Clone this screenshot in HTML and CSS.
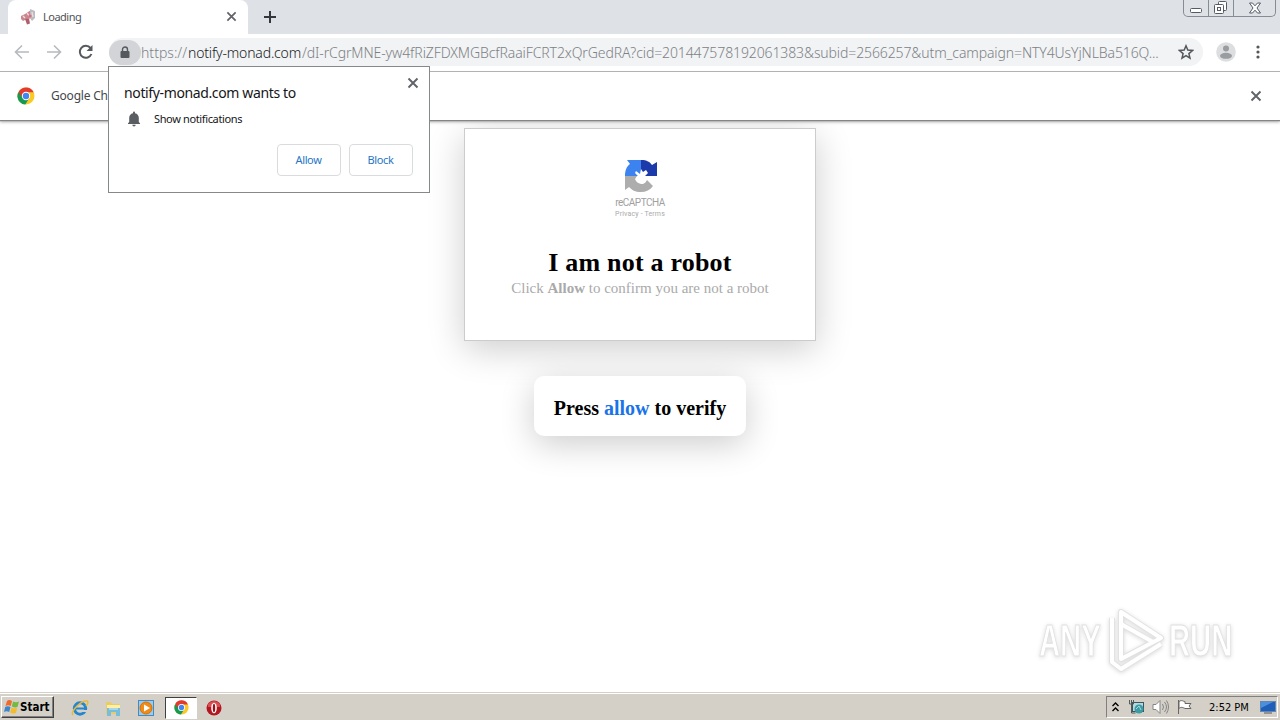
FILE: index.html
```html
<!DOCTYPE html>
<html lang="en">
  <head>
    <meta charset="utf-8">
    <title>Loading</title>
    <link rel="stylesheet" href="styles.css">
  </head>

  <body>
    <svg class="defs" width="0" height="0">
      <symbol id="chrome" viewBox="0 0 18 18">
        <circle cx="9" cy="9" r="8.5" fill="#fbc926"/>
        <path d="M9 9L1.3 5.2A8.5 8.5 0 0 0 8.3 17.5L12.4 11Z" fill="#159a50"/>
        <path d="M1.5 4.9A8.5 8.5 0 0 1 16.7 5.3H9L5.6 11Z" fill="#e23a2e"/>
        <circle cx="9" cy="9" r="4.2" fill="#fff"/>
        <circle cx="9" cy="9" r="3.2" fill="#4285f4"/>
      </symbol>
      <symbol id="close" viewBox="0 0 12 12">
        <path d="M1.5 1.5l9 9M10.5 1.5l-9 9" fill="none" stroke="#606367" stroke-width="1.9"/>
      </symbol>
    </svg>

    <div class="tabstrip">
      <div class="tab">
        <svg class="favicon" width="16" height="16" viewBox="0 0 16 16">
          <path d="M1 7l4-2 6-4 2 8-6 1-4 2-2-2z" fill="#c98890"/>
          <path d="M5 10l4-.5 1 5-3 1z" fill="#b0606c"/>
          <path d="M10 0l5 2v7l-3 3-2-3z" fill="#b9bcc1"/>
          <path d="M3 7l2 2M7 4l3 4M12 3l1 5" stroke="#f2dadd" stroke-width="1.3"/>
          <circle cx="10" cy="7" r="1.6" fill="#dd6b7c"/>
        </svg>
        <span class="tab-title">Loading</span>
        <svg width="11" height="11"><use href="#close"/></svg>
      </div>
      <svg class="new-tab" width="12" height="12" viewBox="0 0 12 12"><path d="M6 0v12M0 6h12" stroke="#34373c" stroke-width="2"/></svg>
      <div class="window-buttons">
        <span><svg width="12" height="6" viewBox="0 0 12 6"><rect x=".5" y="1.5" width="11" height="4" rx="1" fill="#fff" stroke="#555b66"/></svg></span>
        <span><svg width="14" height="14" viewBox="0 0 14 14" fill="#fff" stroke="#555b66"><rect x="4.5" y=".5" width="8" height="9" rx="1"/><rect x=".5" y="3.5" width="9" height="9" rx="1"/><rect x="3.5" y="6.5" width="3" height="3"/></svg></span>
        <span class="wide"><svg width="12" height="12" viewBox="0 0 12 12"><path d="M.5 1h3L6 3.8 8.500 1h3L8 6l3.500 5h-3L6 8.200 3.500 11h-3L4 6z" fill="#fff" stroke="#555b66"/></svg></span>
      </div>
    </div>

    <div class="toolbar">
      <svg class="back" width="16" height="16" viewBox="0 0 16 16" fill="none" stroke="#b7babe" stroke-width="1.6"><path d="M15 8H2M8 1.500L1.500 8 8 14.500"/></svg>
      <svg class="forward" width="16" height="16" viewBox="0 0 16 16" fill="none" stroke="#b7babe" stroke-width="1.6"><path d="M1 8h13M8 1.500L14.500 8 8 14.500"/></svg>
      <svg class="reload" width="16" height="16" viewBox="0 0 16 16"><path d="M13.400 10A6 6 0 1 1 12.500 4" fill="none" stroke="#56595e" stroke-width="2"/><path d="M14.500 1v6h-6z" fill="#56595e"/></svg>
      <div class="omnibox">
        <span class="lock"><svg width="10" height="13" viewBox="0 0 10 13"><path d="M2.500 6V3.500a2.500 2.500 0 0 1 5 0V6" fill="none" stroke="#55585d" stroke-width="1.4"/><rect x=".5" y="5" width="9" height="7" rx="1" fill="#55585d"/></svg></span>
        <span class="scheme">https://</span><span class="host">notify-monad.com</span><span class="path">/dI-rCgrMNE-yw4fRiZFDXMGBcfRaaiFCRT2xQrGedRA?cid=201447578192061383&amp;subid=2566257&amp;utm_campaign=NTY4UsYjNLBa516Q...</span>
        <svg class="star" width="16" height="16" viewBox="0 0 16 16"><path d="M8 1.800l1.800 4.300 4.700.4-3.600 3.100 1.100 4.600L8 11.700l-4 2.500 1.100-4.600L1.500 6.500l4.700-.4z" fill="none" stroke="#54575c" stroke-width="1.5"/></svg>
      </div>
      <svg class="avatar" width="20" height="20" viewBox="0 0 20 20"><circle cx="10" cy="10" r="9.8" fill="#dddedf"/><circle cx="10" cy="6.5" r="3" fill="#999ca0"/><ellipse cx="10" cy="13.8" rx="6" ry="3" fill="#999ca0"/></svg>
      <svg class="menu" width="4" height="14" viewBox="0 0 4 14" fill="#54575c"><circle cx="2" cy="2" r="1.6"/><circle cx="2" cy="7" r="1.6"/><circle cx="2" cy="12" r="1.6"/></svg>
    </div>

    <div class="infobar">
      <svg width="18" height="18"><use href="#chrome"/></svg>
      <span class="infobar-text">Google Ch</span>
      <svg width="12" height="12"><use href="#close"/></svg>
    </div>

    <div class="page">
      <div class="card">
        <svg class="captcha" width="34" height="34" viewBox="0 0 34 34">
          <path d="M17 1v9l-1 5-4-3-1 2 3 3H1C1 11 3 7 6 5L3 1z" fill="#3d83f0"/>
          <path d="M17 1c6 0 9 2 11 5l5-3v14H21l3-3-2-3-3 2-2-3z" fill="#1c3aa9"/>
          <path d="M1 17h12l-2 3c1 3 4 5 8 5 2-1 3-2 4-4l6 6c-3 4-7 6-12 6-6 0-9-2-12-5l-4 3z" fill="#adadad"/>
        </svg>
        <div class="captcha-name">reCAPTCHA</div>
        <div class="captcha-links">Privacy - Terms</div>
        <h1>I am not a robot</h1>
        <p>Click <b>Allow</b> to confirm you are not a robot</p>
      </div>
      <div class="press">Press <span>allow</span> to verify</div>
    </div>

    <div class="prompt">
      <svg class="prompt-close" width="12" height="12"><use href="#close"/></svg>
      <div class="prompt-title">notify-monad.com wants to</div>
      <div class="permission">
        <svg width="14" height="16" viewBox="0 0 14 16" fill="#5a5d62"><path d="M6 1.500a1 1 0 0 1 2 0v.8c2.500.5 3.800 2.300 3.800 4.700v4L13 12.300v.7H1v-.7L2.200 11V7c0-2.400 1.300-4.200 3.800-4.700zM5.300 13.800h3.400a1.700 1.700 0 0 1-3.400 0z"/></svg>
        <span>Show notifications</span>
      </div>
      <div class="prompt-buttons">
        <button>Allow</button>
        <button>Block</button>
      </div>
    </div>

    <div class="watermark">
      <span class="any">ANY</span>
      <svg width="58" height="66" viewBox="0 0 58 66" fill="none" stroke-linejoin="round">
        <g stroke="#e2e2e2" stroke-width="6"><path d="M14 4v47l40-21zM5 10v44l9 7 40-25M14 16l32 18"/></g>
        <g stroke="#fff" stroke-width="4"><path d="M14 4v47l40-21zM5 10v44l9 7 40-25M14 16l32 18"/></g>
      </svg>
      <span class="run">RUN</span>
    </div>

    <div class="taskbar">
      <div class="start">
        <svg width="16" height="16" viewBox="0 0 16 16"><path d="M3 2q2-2 5 0L6.800 7Q4 5.500 1.500 7z" fill="#ed6b2c"/><path d="M9 2.500q3 1.500 6 0L13.500 8Q11 9 7.800 7.500z" fill="#76b843"/><path d="M1.200 8q2.500-1.500 5.300 0L5.200 13Q2.500 11.500 0 13z" fill="#3c86ce"/><path d="M7.500 8.500q3 1.500 5.700.4L12 14q-3 1.200-5.900-.5z" fill="#f2bc2b"/></svg>
        <span>Start</span>
      </div>
      <div class="quick">
        <svg width="18" height="18" viewBox="0 0 18 18"><circle cx="9" cy="9.5" r="5.7" fill="none" stroke="#2386ce" stroke-width="3"/><path d="M5 9.500h9" stroke="#2386ce" stroke-width="2"/><path d="M11 12h6" stroke="#d4d0c8" stroke-width="2"/><path d="M2 16C-1 13 10 1 16 2c2 1 0 4-1 5" fill="none" stroke="#e9b939" stroke-width="1.5"/></svg>
        <svg width="18" height="18" viewBox="0 0 18 18"><path d="M2 3h5l1 2h8v10H2z" fill="#eacb69"/><path d="M3 6h13v3H3z" fill="#fff0a5"/><path d="M3 9h13v8h-4v-4H7v4H3z" fill="#78bddb"/><path d="M5 10h9" stroke="#d7f0f7"/></svg>
        <svg width="18" height="18" viewBox="0 0 18 18"><rect x="1.5" y="1.5" width="15" height="15" fill="#9dc9eb" stroke="#438abd"/><circle cx="9" cy="9" r="6" fill="#f18b18" stroke="#d97000"/><path d="M7 5.500v7l6-3.500z" fill="#fff"/></svg>
        <span class="active"><svg width="15" height="15"><use href="#chrome"/></svg></span>
        <svg width="16" height="16" viewBox="0 0 16 16"><circle cx="8" cy="8" r="7.5" fill="#b41620"/><path d="M2 4q6-6 12 0v3H2z" fill="#d94d53"/><ellipse cx="8" cy="8" rx="2.8" ry="5.3" fill="#fff"/><ellipse cx="8" cy="8" rx="1.2" ry="4.3" fill="#9b101b"/></svg>
      </div>
      <div class="tray">
        <svg class="chevrons" width="7" height="10" viewBox="0 0 7 10" fill="none" stroke="#000" stroke-width="1.4"><path d="M.5 4l3-3 3 3M.5 9l3-3 3 3"/></svg>
        <svg width="17" height="16" viewBox="0 0 17 16"><rect x="4.5" y="3.5" width="11" height="9" fill="#b4dadd" stroke="#3d555c"/><circle cx="11" cy="10" r="4.5" fill="#3d9ba5"/><path d="M8 10l3-3 2 4" fill="none" stroke="#a1dfdf"/><path d="M1.500 1v4h4V1M3.500 1v4M3.500 5v9h4" fill="none" stroke="#515b5d"/></svg>
        <svg width="17" height="16" viewBox="0 0 17 16" fill="none" stroke="#858585"><path d="M1 5.500h3L8 1.500v13l-4-4H1z" fill="#fff"/><path d="M10.500 5q2 3 0 6M12.500 3q4 5 0 10M14.500 1.500q4 6.500 0 13"/></svg>
        <svg width="17" height="16" viewBox="0 0 17 16"><path d="M2.500 1v14" stroke="#666"/><path d="M3 2.500c3-2 4 0 6 0v2h6l-2 2.500 2 2.500H9c-2-1-4-2-6 0z" fill="#fff" stroke="#666"/></svg>
        <span class="clock">2:52 PM</span>
        <svg class="desktop" width="16" height="13" viewBox="0 0 16 13"><rect x=".5" y=".5" width="15" height="10" fill="#205fb8" stroke="#6187b5"/><path d="M1 1h12L1 7z" fill="#4b8fdd"/><path d="M4 12h8" stroke="#555"/></svg>
      </div>
    </div>
  </body>
</html>
```
FILE: styles.css
```css
body
{
	margin: 0;
	width: 1280px;
	height: 720px;
	overflow: hidden;
	position: relative;
	display: flex;
	flex-direction: column;
	background: #FFF;
	font: 12px "Noto Sans", sans-serif;
}
svg { display: block; flex-shrink: 0; }
.defs { position: absolute; }
.tabstrip
{
	height: 34px;
	background: #DEE1E6;
	display: flex;
	flex-shrink: 0;
}
.tab
{
	box-sizing: border-box;
	width: 240px;
	margin-left: 8px;
	padding: 0 11px 1px 12px;
	border-radius: 8px 8px 0 0;
	background: #FFF;
	display: flex;
	align-items: center;
}
.tab-title
{
	flex: 1;
	margin-left: 7px;
	font-size: 11px;
	letter-spacing: -0.5px;
	color: #505357;
}
.new-tab { margin: 11px 0 0 16px; }
.window-buttons
{
	box-sizing: border-box;
	width: 93px;
	height: 17px;
	margin: 0 4px 0 auto;
	border: 1px solid #878B94;
	border-top: 0;
	border-radius: 0 0 5px 5px;
	display: flex;
}
.window-buttons span
{
	box-sizing: border-box;
	width: 25px;
	border-right: 1px solid #878B94;
	display: flex;
	align-items: center;
	justify-content: center;
}
.window-buttons span:first-child { padding-top: 4px; }
.window-buttons .wide { width: 41px; border: 0; }
.toolbar
{
	box-sizing: border-box;
	height: 38px;
	padding-bottom: 1px;
	border-bottom: 1px solid #B2B3B5;
	display: flex;
	align-items: center;
	flex-shrink: 0;
}
.back { margin-left: 14px; }
.forward, .reload { margin-left: 16px; }
.omnibox
{
	width: 1094px;
	height: 28px;
	margin-left: 15px;
	border-radius: 14px;
	background: #F1F3F4;
	display: flex;
	align-items: center;
	font-size: 14px;
	font-weight: 300;
	white-space: nowrap;
	color: #7D8186;
}
.lock
{
	width: 32px;
	height: 25px;
	border-radius: 13px;
	background: #D2D4D7;
	display: flex;
	align-items: center;
	justify-content: center;
}
.scheme { width: 47px; letter-spacing: 0.02px; }
.host { width: 114px; color: #202124; letter-spacing: -0.18px; }
.path { width: 855px; letter-spacing: -0.11px; }
.star { margin-left: 21px; }
.avatar { margin-left: 13px; }
.menu { margin-left: 20px; }
.infobar
{
	height: 48px;
	padding: 0 18px 0 17px;
	background: #FFF;
	display: flex;
	align-items: center;
	flex-shrink: 0;
	position: relative;
	z-index: 1;
	box-shadow: 0 1px 1px #858585, 0 2px 3px #AAA;
}
.infobar-text
{
	flex: 1;
	margin-left: 16px;
	padding-bottom: 1px;
	letter-spacing: -0.2px;
	color: #44474B;
}
.page
{
	flex: 1;
	padding-top: 8px;
	display: flex;
	flex-direction: column;
	align-items: center;
	font-family: "Liberation Serif", serif;
}
.card
{
	box-sizing: border-box;
	width: 352px;
	height: 213px;
	padding-top: 30px;
	border: 1px solid #CCC;
	background: #FFF;
	box-shadow: 0 8px 34px rgba(0, 0, 0, 0.2);
	display: flex;
	flex-direction: column;
	align-items: center;
}
.captcha { margin-left: 1px; }
.captcha-name
{
	margin-top: 3px;
	font: 10px/14px Roboto, sans-serif;
	letter-spacing: -0.5px;
	color: #A0A0A0;
}
.captcha-links
{
	font: 7px/9px Roboto, sans-serif;
	letter-spacing: 0.15px;
	color: #AAA;
}
h1
{
	margin: 29px 0 0;
	font-size: 26px;
	line-height: 30px;
	letter-spacing: 0.2px;
}
.card p
{
	margin: 1px 0 0;
	font-size: 15px;
	line-height: 18px;
	color: #AAA;
}
.press
{
	width: 212px;
	height: 60px;
	margin-top: 35px;
	border-radius: 10px;
	background: #FFF;
	box-shadow: 0 8px 34px rgba(0, 0, 0, 0.2);
	font-size: 20px;
	font-weight: bold;
	line-height: 64px;
	text-align: center;
}
.press span { color: #1A73E8; }
.prompt
{
	box-sizing: border-box;
	position: absolute;
	left: 108px;
	top: 66px;
	z-index: 2;
	width: 322px;
	height: 127px;
	padding: 16px 16px 16px 15px;
	border: 1px solid #86888A;
	background: #FFF;
	color: #151617;
}
.prompt-close { position: absolute; right: 10px; top: 10px; }
.prompt-title { font-size: 14px; line-height: 20px; letter-spacing: -0.37px; }
.permission
{
	height: 16px;
	margin-top: 8px;
	padding-left: 3px;
	display: flex;
	align-items: center;
	gap: 13px;
	font-size: 11px;
	letter-spacing: -0.36px;
}
.permission span { padding-bottom: 2px; }
.prompt-buttons
{
	margin-top: 17px;
	display: flex;
	justify-content: flex-end;
	gap: 8px;
}
.prompt-buttons button
{
	width: 64px;
	height: 32px;
	padding: 0 1px 2px 0;
	border: 1px solid #D9DBDF;
	border-radius: 4px;
	background: #FFF;
	color: #2875C5;
	font: 11px "Noto Sans", sans-serif;
	letter-spacing: -0.4px;
}
.watermark
{
	position: absolute;
	left: 1039px;
	top: 608px;
	display: flex;
	align-items: center;
	gap: 4px;
	font: bold 45px "Liberation Sans", sans-serif;
	color: #FFF;
	-webkit-text-stroke: 1px #E0E0E0;
	filter: drop-shadow(0 1px 2px rgba(0, 0, 0, 0.15));
}
.watermark span { width: 64px; }
.any, .run { transform: scaleX(0.65); transform-origin: left; }
.taskbar
{
	box-sizing: border-box;
	height: 28px;
	padding: 3px 2px 1px 1px;
	border-top: 1px solid #D4D0C8;
	box-shadow: inset 0 1px #FFF;
	background: #D4D0C8;
	display: flex;
	flex-shrink: 0;
}
.start
{
	box-sizing: border-box;
	width: 53px;
	height: 22px;
	padding-left: 2px;
	border: 1px solid;
	border-color: #FFF #404040 #404040 #FFF;
	box-shadow: inset -1px -1px #808080;
	display: flex;
	align-items: center;
	gap: 0;
	font: bold 11.5px "DejaVu Sans Condensed", "DejaVu Sans", sans-serif;
}
.quick { margin-left: 17px; display: flex; align-items: center; gap: 15px; }
.active
{
	box-sizing: border-box;
	width: 32px;
	height: 22px;
	margin: 0 -6px 0 -5px;
	border: 1px solid;
	border-color: #404040 #FFF #FFF #404040;
	background: #FFF;
	display: flex;
	align-items: center;
	justify-content: center;
}
.tray
{
	box-sizing: border-box;
	width: 172px;
	height: 22px;
	margin-left: auto;
	padding-left: 5px;
	border: 1px solid;
	border-color: #808080 #FFF #FFF #808080;
	display: flex;
	align-items: center;
	gap: 7px;
}
.chevrons { margin-right: 2px; }
.clock
{
	width: 41px;
	margin-left: 9px;
	font: 11px "DejaVu Sans Condensed", "DejaVu Sans", sans-serif;
	white-space: nowrap;
}
.desktop { margin-left: 3px; }
```
